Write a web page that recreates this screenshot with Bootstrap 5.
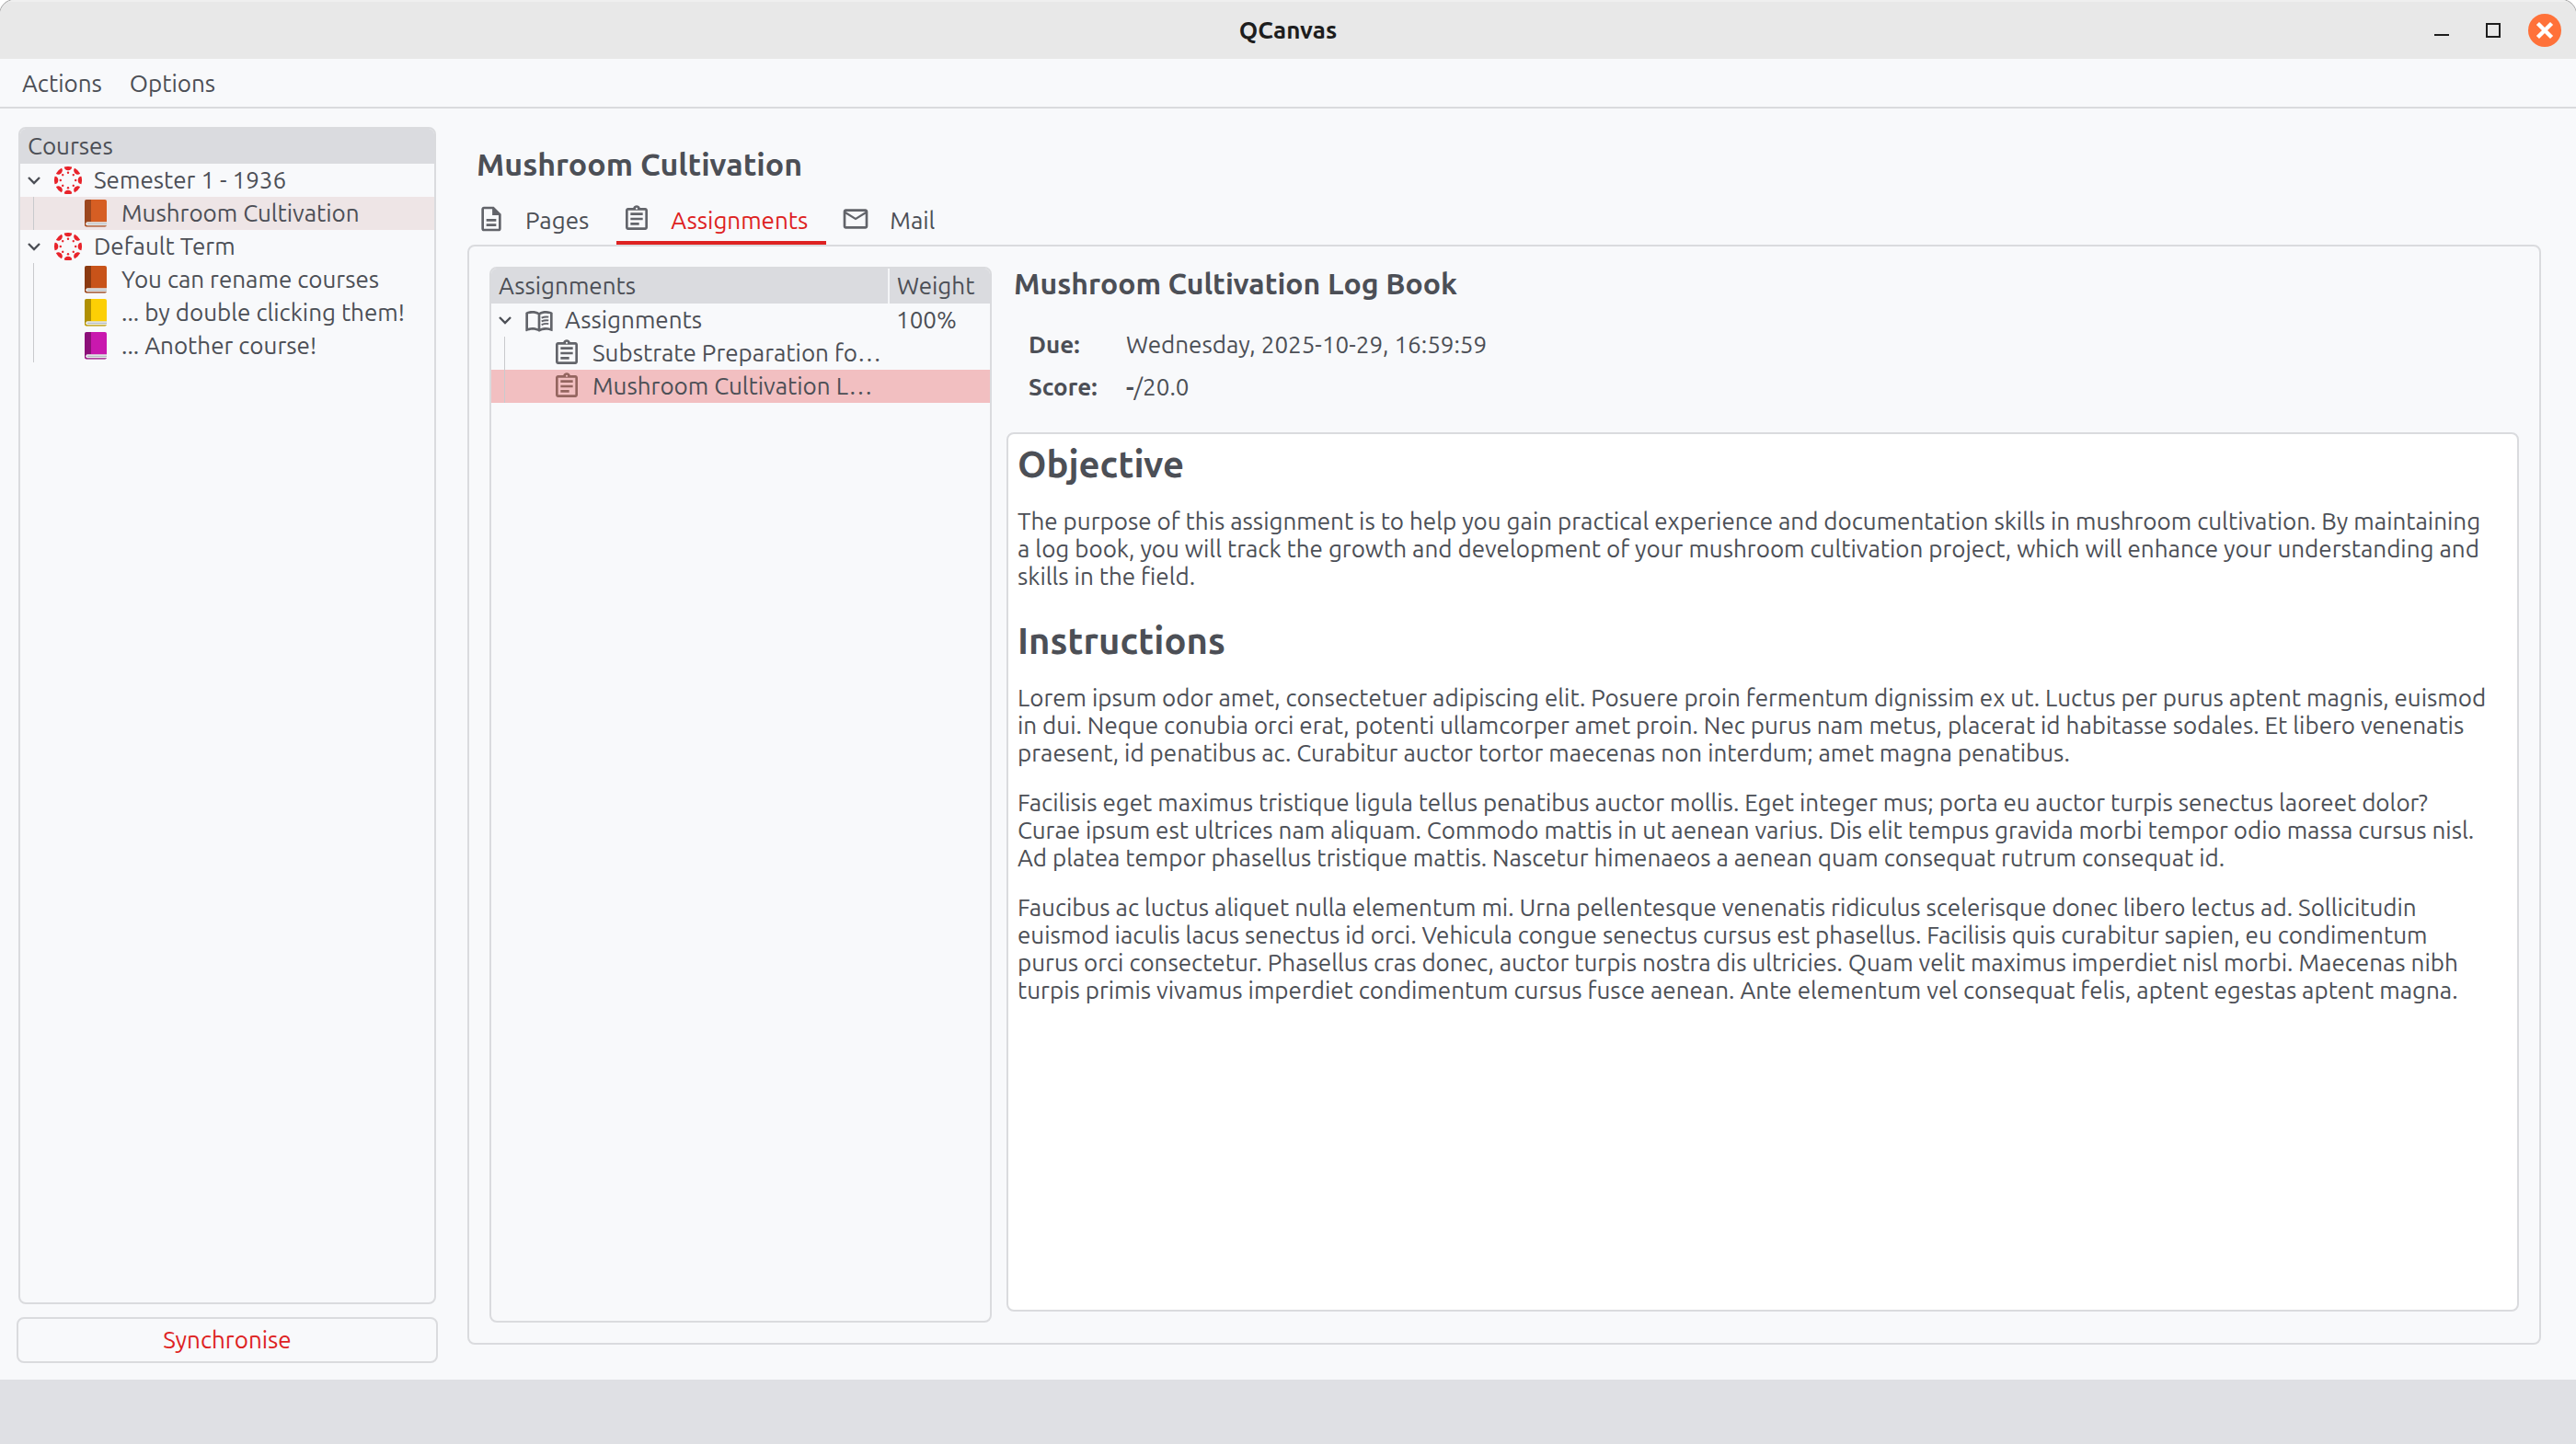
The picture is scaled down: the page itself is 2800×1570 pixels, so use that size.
<!DOCTYPE html>
<html lang="en">
<head>
<meta charset="utf-8">
<meta name="viewport" content="width=device-width, initial-scale=1">
<title>QCanvas</title>
<link href="https://cdn.jsdelivr.net/npm/bootstrap@5.3.0/dist/css/bootstrap.min.css" rel="stylesheet">
<style>
:root { --ink:#4c4f56; --line:#dadbde; --head:#dadbdf; --bg:#f8f9fb; --accent:#de2222; }
body { background:#fff; color:var(--ink); font-family:Ubuntu,"Noto Sans",sans-serif; font-size:26px; line-height:30px; }
.window { background:var(--bg); border-radius:16px 16px 0 0; overflow:hidden; box-shadow:0 0 0 1px #aaa; }
.titlebar { height:64px; background:#e8e8e8; border-top:2px solid #efefef; color:#1d1d1d; display:grid; grid-template-columns:1fr auto 1fr; align-items:center; }
.titlebar h1 { font-size:26px; line-height:30px; font-weight:600; margin:0; }
.titlebar button, .menus button { background:none; border:0; padding:0; color:inherit; }
.controls { gap:20px; padding-right:16px; }
.controls button { width:36px; }
.menus { height:54px; border-bottom:2px solid var(--line); padding:2px 24px 0; gap:30px; }
.sidebar { width:458px; gap:14px; }
.courses { margin:0 2px; }
.workspace { padding:20px 38px 18px 18px; gap:32px; }
.pane { border:2px solid var(--line); border-radius:8px; }
.tree-head { background:var(--head); height:38px; padding:0 8px; line-height:38px; margin:0; font-size:26px; font-weight:400; }
.tree, .tree ul { list-style:none; margin:0; padding:0; }
.node { height:36px; display:flex; align-items:center; white-space:nowrap; }
.tree > li > .node { padding-left:8px; }
.tree ul .node { padding-left:70px; }
.branch { background:linear-gradient(#c9cacd,#c9cacd) 14px 0/1px 100% no-repeat; }
.node.current { background-color:#eee5e6; }
.chev { width:14px; height:10px; flex:none; }
.logo { width:30px; height:30px; margin:0 13px 0 15px; flex:none; }
.tome { width:24px; height:30px; margin-right:16px; flex:none; }
.current .tome { opacity:.9; }
.sync { height:50px; border:2px solid var(--line); border-radius:8px; background:var(--bg); color:var(--accent); }
.mainview { padding-bottom:20px; }
.course-title { font-size:34px; line-height:40px; font-weight:700; margin:0 0 0 10px; padding:20px 0; }
.tabs { gap:10px; padding-left:4px; border:0; }
.tabs .nav-link { display:flex; align-items:center; border:0; border-bottom:4px solid transparent; border-radius:0; margin:0; padding:0 20px 0 6px; height:48px; gap:21px; color:var(--ink); background:none; line-height:44px; }
.tabs .nav-link svg { margin-bottom:4px; color:#62646a; }
.tabs .nav-link.active { color:var(--accent); border-bottom-color:var(--accent); background:none; }
.ico { width:32px; height:32px; flex:none; fill:currentColor; }
.tabpane { padding:22px; gap:16px; }
.worklist { width:546px; overflow:hidden; flex:none; }
.worklist table { width:100%; table-layout:fixed; border-collapse:collapse; }
.worklist th { background:var(--head); font-weight:400; height:38px; padding:0 8px; }
.worklist th + th { border-left:2px solid #f4f5f7; }
.worklist td { height:36px; padding:0 8px; vertical-align:middle; white-space:nowrap; }
.worklist td .node { gap:12px; }
.worklist td .chev { margin-right:2px; }
.worklist td.sub { padding-left:66px; }
.worklist td .ico { color:#62646a; }
.worklist tr.picked { background:#f2bfc1; }
.worklist tr.picked .ico { color:#94655f; }
.detail { min-width:0; padding-bottom:12px; }
.detail h2 { font-size:32px; line-height:36px; font-weight:700; margin:0 0 34px 8px; }
.facts { display:grid; grid-template-columns:106px 1fr; row-gap:16px; margin:0 0 34px 24px; }
.facts dt { font-weight:700; }
.facts dd { margin:0; }
.doc { background:#fff; padding:10px; }
.doc h3 { font-size:40px; line-height:46px; font-weight:700; margin:0 0 24px; }
.doc p { margin:0 0 24px; white-space:nowrap; }
.doc p + h3 { margin-top:32px; }
.status { height:70px; background:#dfe0e4; }
</style>
</head>
<body>
<svg class="d-none" aria-hidden="true">
  <symbol id="chev" viewBox="0 0 14 10"><path d="M1 2l6 6 6-6" fill="none" stroke="#4c4f56" stroke-width="2.4"/></symbol>
  <symbol id="canvas" viewBox="0 0 30 30">
    <g fill="#e8232b">
      <g id="spoke"><path d="M10.800.600A15 15 0 0 1 19.200.600C19.200 3 17.300 4.300 15 4.300S10.800 3 10.800.600z"/><circle cx="15" cy="6.800" r="1.200"/></g>
      <use href="#spoke" transform="rotate(45 15 15)"/><use href="#spoke" transform="rotate(90 15 15)"/>
      <use href="#spoke" transform="rotate(135 15 15)"/><use href="#spoke" transform="rotate(180 15 15)"/>
      <use href="#spoke" transform="rotate(225 15 15)"/><use href="#spoke" transform="rotate(270 15 15)"/>
      <use href="#spoke" transform="rotate(315 15 15)"/>
    </g>
  </symbol>
  <symbol id="tome" viewBox="0 0 24 30">
    <rect width="24" height="29.5" rx="2" fill="currentColor"/>
    <path d="M2 0h5v24H3q-2 0-3 2V2q0-2 2-2z" fill="#000" fill-opacity=".3"/>
    <path d="M0 26q0-2 2-2h22v3.500q0 2-2 2H2q-2 0-2-2z" fill="#000" fill-opacity=".25"/>
    <path d="M3 24.300h21v4H3q-1.700 0-1.700-2t1.700-2z" fill="#eceeef"/>
    <path d="M3 26.300h21" stroke="#a9b0b3" stroke-width="1"/>
  </symbol>
  <symbol id="page" viewBox="0 0 24 24"><path d="M14 2H6C4.900 2 4 2.900 4 4v16c0 1.100.890 2 1.990 2H18c1.100 0 2-.9 2-2V8l-6-6zM6 20V4h7v5h5v11H6zM8 12h8v2H8zM8 16h8v2H8z"/><path d="M13 3l6 6h-6z"/></symbol>
  <symbol id="task" viewBox="0 0 24 24"><path d="M7 15h7v2H7zm0-4h10v2H7zm0-4h10v2H7zm12-4h-4.180C14.400 1.840 13.300 1 12 1s-2.400.840-2.820 2H5c-1.100 0-2 .9-2 2v14c0 1.100.9 2 2 2h14c1.100 0 2-.9 2-2V5c0-1.100-.9-2-2-2zm-7-.250c.410 0 .750.340.750.750s-.340.750-.750.750-.750-.340-.750-.750.340-.750.750-.750zM19 19H5V5h14v14z"/></symbol>
  <symbol id="mail" viewBox="0 0 24 24"><path d="M22 6c0-1.100-.9-2-2-2H4c-1.100 0-2 .9-2 2v12c0 1.100.9 2 2 2h16c1.100 0 2-.9 2-2V6zm-2 0l-8 5-8-5h16zm0 12H4V8l8 5 8-5v10z"/></symbol>
  <symbol id="book" viewBox="0 0 24 24"><path d="M21 5c-1.110-.350-2.330-.5-3.500-.5-1.950 0-4.050.4-5.500 1.500-1.450-1.100-3.550-1.500-5.500-1.500S2.450 4.900 1 6v14.650c0 .250.250.5.5.5.100 0 .150-.050.250-.050C3.100 20.450 5.050 20 6.500 20c1.950 0 4.050.4 5.500 1.500 1.350-.850 3.800-1.500 5.500-1.500 1.650 0 3.350.3 4.750 1.050.100.050.150.050.250.050.250 0 .5-.250.5-.5V6c-.6-.450-1.250-.750-2-1zM3 18.500V7c1.100-.350 2.300-.5 3.500-.5 1.340 0 3.130.410 4.500.990v11.500C9.630 18.410 7.840 18 6.500 18c-1.200 0-2.400.150-3.500.5zm18 0c-1.100-.350-2.300-.5-3.500-.5-1.340 0-3.130.410-4.500.990V7.490c1.370-.590 3.160-.990 4.500-.990 1.200 0 2.400.150 3.500.5v11.500z"/><path d="M14 10.200q2.800-1.200 5.700-.7M14 13q2.800-1.200 5.700-.7M14 15.800q2.800-1.200 5.700-.7" fill="none" stroke="currentColor" stroke-width="1.400"/></symbol>
</svg>

<div class="window d-flex flex-column min-vh-100">
  <header class="titlebar">
    <span></span>
    <h1>QCanvas</h1>
    <div class="controls d-flex align-items-center justify-content-end">
      <button type="button" aria-label="Minimise" class="d-flex justify-content-center"><svg width="18" height="18"><path d="M1 14h16" stroke="#1d1d1d" stroke-width="2"/></svg></button>
      <button type="button" aria-label="Maximise" class="d-flex justify-content-center"><svg width="18" height="18"><path d="M2 2h14v14H2z" fill="none" stroke="#1d1d1d" stroke-width="2"/></svg></button>
      <button type="button" aria-label="Close" class="d-flex"><svg width="36" height="36"><circle cx="18" cy="18" r="18" fill="#ff7139"/><path d="M12 12l12 12m0-12l-12 12" stroke="#fff" stroke-width="4.400" stroke-linecap="square"/></svg></button>
    </div>
  </header>

  <nav class="menus d-flex align-items-center" aria-label="Menu bar">
    <button type="button">Actions</button>
    <button type="button">Options</button>
  </nav>

  <div class="workspace d-flex flex-grow-1">
    <aside class="sidebar d-flex flex-column flex-shrink-0">
      <section class="courses pane flex-grow-1 overflow-hidden">
        <h2 class="tree-head">Courses</h2>
        <ul class="tree">
          <li>
            <div class="node"><svg class="chev"><use href="#chev"/></svg><svg class="logo"><use href="#canvas"/></svg>Semester 1 - 1936</div>
            <ul>
              <li class="node branch current"><svg class="tome" color="#d4500f"><use href="#tome"/></svg>Mushroom Cultivation</li>
            </ul>
          </li>
          <li>
            <div class="node"><svg class="chev"><use href="#chev"/></svg><svg class="logo"><use href="#canvas"/></svg>Default Term</div>
            <ul>
              <li class="node branch"><svg class="tome" color="#c85319"><use href="#tome"/></svg>You can rename courses</li>
              <li class="node branch"><svg class="tome" color="#fccf05"><use href="#tome"/></svg>... by double clicking them!</li>
              <li class="node branch"><svg class="tome" color="#c918ae"><use href="#tome"/></svg>... Another course!</li>
            </ul>
          </li>
        </ul>
      </section>
      <button type="button" class="sync">Synchronise</button>
    </aside>

    <main class="mainview d-flex flex-column flex-grow-1">
      <h2 class="course-title">Mushroom Cultivation</h2>
      <div class="tabs nav nav-tabs" role="tablist">
        <button class="nav-link" type="button" role="tab"><svg class="ico"><use href="#page"/></svg>Pages</button>
        <button class="nav-link active" type="button" role="tab" aria-selected="true"><svg class="ico"><use href="#task"/></svg>Assignments</button>
        <button class="nav-link" type="button" role="tab"><svg class="ico"><use href="#mail"/></svg>Mail</button>
      </div>
      <div class="tabpane pane d-flex flex-grow-1" role="tabpanel">
        <div class="worklist pane">
          <table>
            <colgroup><col><col style="width:110px"></colgroup>
            <thead><tr><th>Assignments</th><th>Weight</th></tr></thead>
            <tbody>
              <tr><td><div class="node"><svg class="chev"><use href="#chev"/></svg><svg class="ico"><use href="#book"/></svg>Assignments</div></td><td>100%</td></tr>
              <tr><td class="sub branch"><div class="node"><svg class="ico"><use href="#task"/></svg>Substrate Preparation fo…</div></td><td></td></tr>
              <tr class="picked"><td class="sub branch"><div class="node"><svg class="ico"><use href="#task"/></svg>Mushroom Cultivation L…</div></td><td></td></tr>
            </tbody>
          </table>
        </div>
        <article class="detail d-flex flex-column flex-grow-1">
          <h2>Mushroom Cultivation Log Book</h2>
          <dl class="facts">
            <dt>Due:</dt><dd>Wednesday, 2025-10-29, 16:59:59</dd>
            <dt>Score:</dt><dd><b>-</b>/20.0</dd>
          </dl>
          <div class="doc pane flex-grow-1">
            <h3>Objective</h3>
            <p>The purpose of this assignment is to help you gain practical experience and documentation skills in mushroom cultivation. By maintaining<br>a log book, you will track the growth and development of your mushroom cultivation project, which will enhance your understanding and<br>skills in the field.</p>
            <h3>Instructions</h3>
            <p>Lorem ipsum odor amet, consectetuer adipiscing elit. Posuere proin fermentum dignissim ex ut. Luctus per purus aptent magnis, euismod<br>in dui. Neque conubia orci erat, potenti ullamcorper amet proin. Nec purus nam metus, placerat id habitasse sodales. Et libero venenatis<br>praesent, id penatibus ac. Curabitur auctor tortor maecenas non interdum; amet magna penatibus.</p>
            <p>Facilisis eget maximus tristique ligula tellus penatibus auctor mollis. Eget integer mus; porta eu auctor turpis senectus laoreet dolor?<br>Curae ipsum est ultrices nam aliquam. Commodo mattis in ut aenean varius. Dis elit tempus gravida morbi tempor odio massa cursus nisl.<br>Ad platea tempor phasellus tristique mattis. Nascetur himenaeos a aenean quam consequat rutrum consequat id.</p>
            <p>Faucibus ac luctus aliquet nulla elementum mi. Urna pellentesque venenatis ridiculus scelerisque donec libero lectus ad. Sollicitudin<br>euismod iaculis lacus senectus id orci. Vehicula congue senectus cursus est phasellus. Facilisis quis curabitur sapien, eu condimentum<br>purus orci consectetur. Phasellus cras donec, auctor turpis nostra dis ultricies. Quam velit maximus imperdiet nisl morbi. Maecenas nibh<br>turpis primis vivamus imperdiet condimentum cursus fusce aenean. Ante elementum vel consequat felis, aptent egestas aptent magna.</p>
          </div>
        </article>
      </div>
    </main>
  </div>
  <footer class="status"></footer>
</div>
<script src="https://cdn.jsdelivr.net/npm/bootstrap@5.3.0/dist/js/bootstrap.bundle.min.js"></script>
</body>
</html>
